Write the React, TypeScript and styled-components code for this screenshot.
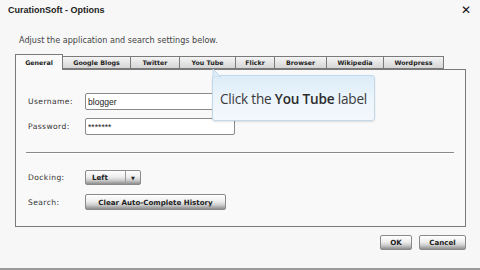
import React from "react";
import styled, { createGlobalStyle } from "styled-components";

const Global = createGlobalStyle`
  html, body { margin: 0; padding: 0; }
  body { width: 480px; height: 270px; overflow: hidden; background: #f6f6f6; font-family: "DejaVu Sans", Verdana, sans-serif; }
`;

const Dialog = styled.div`
  position: relative;
  width: 480px;
  height: 270px;
  box-sizing: border-box;
  border-bottom: 2px solid #9a9a9a;
  background: #f7f7f7;
  display: flex;
  flex-direction: column;
`;

const TitleBar = styled.div`
  height: 20px;
  display: flex;
  align-items: center;
  justify-content: space-between;
  padding: 0 9px 0 8px;
`;

const Title = styled.div`
  font-family: "Liberation Sans", Arial, sans-serif;
  font-weight: bold;
  font-size: 9px;
  color: #222;
`;

const Close = styled.div`
  font-family: "DejaVu Sans", sans-serif;
  font-weight: bold;
  font-size: 12px;
  color: #111;
  line-height: 1;
`;

const Intro = styled.div`
  margin: 15px 0 0 19px;
  font-size: 8.1px;
  color: #444;
  height: 10px;
  line-height: 10px;
`;

const TabRow = styled.div`
  display: flex;
  align-items: flex-end;
  margin: 8px 0 0 15px;
  height: 16px;
`;

const Tab = styled.div<{ $w: number; $active?: boolean }>`
  width: ${(p) => p.$w}px;
  box-sizing: border-box;
  height: ${(p) => (p.$active ? 16 : 13)}px;
  display: flex;
  align-items: center;
  justify-content: center;
  font-family: "DejaVu Sans", sans-serif;
  font-weight: bold;
  font-size: 6.3px;
  color: #222;
  border: 1px solid #7a7a7a;
  border-left: ${(p) => (p.$active ? "1px solid #7a7a7a" : "none")};
  border-bottom: ${(p) => (p.$active ? "none" : "1px solid #7a7a7a")};
  background: ${(p) =>
    p.$active ? "#fafafa" : "linear-gradient(#f4f4f4, #d6d6d6)"};
  position: relative;
  z-index: ${(p) => (p.$active ? 1 : 0)};
  margin-bottom: ${(p) => (p.$active ? -1 : 0)}px;
`;

const TabFiller = styled.div`
  flex: 1;
`;

const Panel = styled.div`
  margin: 0 14px 0 15px;
  height: 158px;
  box-sizing: border-box;
  border: 1px solid #7a7a7a;
  background: #f9f9f9;
  padding: 23px 10px 0 12px;
  display: flex;
  flex-direction: column;
`;

const Row = styled.div<{ $mt?: number }>`
  display: flex;
  align-items: center;
  margin-top: ${(p) => p.$mt ?? 0}px;
`;

const Label = styled.div`
  width: 57px;
  font-size: 7.6px;
  color: #333;
  letter-spacing: 0.4px;
`;

const Input = styled.div`
  width: 150px;
  height: 17px;
  box-sizing: border-box;
  border: 1px solid #8a8a8a;
  border-radius: 2px;
  background: #fff;
  display: flex;
  align-items: center;
  padding-left: 2px;
  font-family: "Liberation Sans", Arial, sans-serif;
  font-size: 8.6px;
  color: #222;
`;

const Separator = styled.div`
  margin: 17px 0 0 -2px;
  height: 1px;
  width: 428px;
  background: #8a8a8a;
  border-bottom: 1px solid #fff;
`;

const BtnBase = styled.div`
  box-sizing: border-box;
  border: 1px solid #8a8a8a;
  border-radius: 2px;
  background: linear-gradient(#ffffff 0%, #eeeeee 45%, #cfcfcf 70%, #8e8e8e 100%);
  font-family: "DejaVu Sans", sans-serif;
  font-weight: bold;
  font-size: 7.1px;
  color: #222;
  display: flex;
  align-items: center;
`;

const Dropdown = styled(BtnBase)`
  width: 56px;
  height: 15px;
`;

const DropText = styled.div`
  flex: 1;
  padding-left: 6px;
  height: 100%;
  display: flex;
  align-items: center;
  border-right: 1px solid #9a9a9a;
`;

const DropArrow = styled.div`
  width: 14px;
  display: flex;
  justify-content: center;
  font-size: 5px;
`;

const Button = styled(BtnBase)<{ $w: number; $h?: number }>`
  width: ${(p) => p.$w}px;
  height: ${(p) => p.$h ?? 16}px;
  justify-content: center;
`;

const Footer = styled.div`
  display: flex;
  justify-content: flex-end;
  gap: 7px;
  margin: 8px 14px 0 0;
`;

const Tooltip = styled.div`
  position: absolute;
  left: 212px;
  top: 75px;
  width: 163px;
  height: 46px;
  box-sizing: border-box;
  border: 1px solid #c3d8e8;
  border-radius: 3px;
  background: linear-gradient(#dcecf8, #eef6fc 60%, #f3f8fc);
  box-shadow: 0 1px 2px rgba(0, 0, 0, 0.12);
  display: flex;
  align-items: center;
  justify-content: center;
  font-family: "Open Sans", sans-serif;
  font-size: 13.6px;
  color: #3a3a3a;
  letter-spacing: -0.2px;
  z-index: 5;
`;

const Pointer = styled.svg`
  position: absolute;
  left: -1px;
  top: -7px;
`;

const Bold = styled.b`
  font-weight: 600;
  color: #2c2c2c;
`;

const tabs: [string, number][] = [
  ["General", 48],
  ["Google Blogs", 68],
  ["Twitter", 49],
  ["You Tube", 56],
  ["Flickr", 39],
  ["Browser", 52],
  ["Wikipedia", 57],
  ["Wordpress", 60],
];

export default function App() {
  return (
    <>
      <Global />
      <Dialog>
        <TitleBar>
          <Title>CurationSoft - Options</Title>
          <Close>✕</Close>
        </TitleBar>
        <Intro>Adjust the application and search settings below.</Intro>
        <TabRow>
          {tabs.map(([t, w], i) => (
            <Tab key={t} $w={w} $active={i === 0}>
              {t}
            </Tab>
          ))}
          <TabFiller />
        </TabRow>
        <Panel>
          <Row>
            <Label>Username:</Label>
            <Input>blogger</Input>
          </Row>
          <Row $mt={8}>
            <Label>Password:</Label>
            <Input>*******</Input>
          </Row>
          <Separator />
          <Row $mt={16}>
            <Label>Docking:</Label>
            <Dropdown>
              <DropText>Left</DropText>
              <DropArrow>▼</DropArrow>
            </Dropdown>
          </Row>
          <Row $mt={9}>
            <Label>Search:</Label>
            <Button $w={141}>Clear Auto-Complete History</Button>
          </Row>
        </Panel>
        <Footer>
          <Button $w={32} $h={15}>OK</Button>
          <Button $w={47} $h={15}>Cancel</Button>
        </Footer>
        <Tooltip>
          <Pointer width="10" height="8" viewBox="0 0 10 8">
            <path d="M1 0 L9 8 L1 8 Z" fill="#dcecf8" stroke="#c3d8e8" strokeWidth="1" />
          </Pointer>
          <span>
            Click the <Bold>You Tube</Bold> label
          </span>
        </Tooltip>
      </Dialog>
    </>
  );
}
